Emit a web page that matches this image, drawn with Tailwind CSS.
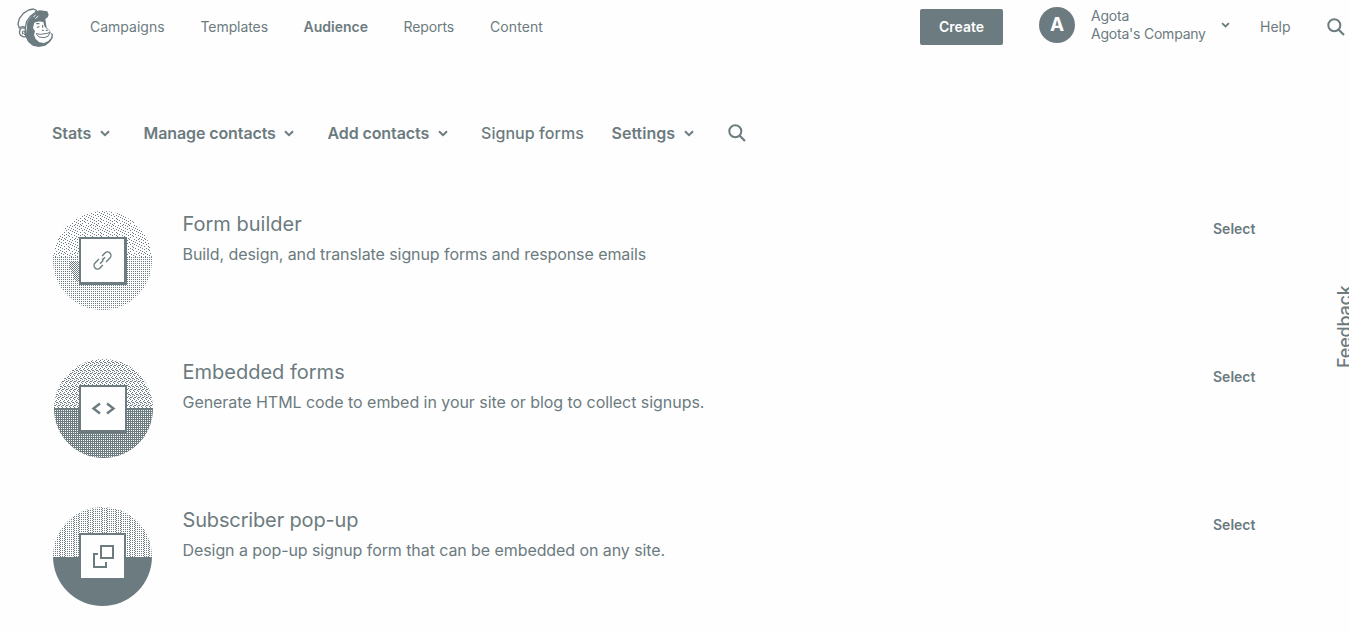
<!DOCTYPE html>
<html lang="en">
<head>
<meta charset="utf-8">
<title>Signup forms</title>
<script src="https://cdn.jsdelivr.net/npm/@tailwindcss/browser@4"></script>
</head>
<body class="relative h-[632px] w-[1349px] overflow-hidden bg-[#fefefe] font-['Inter',sans-serif] text-[#6c7b7f]">
<svg class="absolute size-0" aria-hidden="true">
  <defs>
    <symbol id="chev" viewBox="0 0 10 7"><path d="M1 1.2L5 5.2L9 1.2" fill="none" stroke="currentColor" stroke-width="2"/></symbol>
    <symbol id="search" viewBox="0 0 18 18"><circle cx="7.3" cy="7.3" r="6" fill="none" stroke="currentColor" stroke-width="2"/><path d="M11.7 11.7L17 17" stroke="currentColor" stroke-width="2.2"/></symbol>
    <pattern id="dots" width="2" height="2" patternUnits="userSpaceOnUse"><path d="M0 0h1v1h-1z" fill="#6c7b7f"/></pattern>
    <pattern id="holes" width="2" height="2" patternUnits="userSpaceOnUse"><path d="M0 0h2v1h-1v1h-1z" fill="#6c7b7f"/></pattern>
    <pattern id="check" width="2" height="2" patternUnits="userSpaceOnUse"><path d="M0 0h1v1h-1zM1 1h1v1h-1z" fill="#6c7b7f"/></pattern>
    <pattern id="weave" width="8" height="8" patternUnits="userSpaceOnUse"><path d="M0 0h1v1h-1zM2 1h1v1h-1zM4 0h1v1h-1zM6 1h1v1h-1zM1 2h1v1h-1zM3 3h1v1h-1zM5 2h1v1h-1zM7 3h1v1h-1zM0 4h1v1h-1zM2 5h1v1h-1zM4 4h1v1h-1zM6 5h1v1h-1zM1 6h1v1h-1zM3 7h1v1h-1zM5 6h1v1h-1zM7 7h1v1h-1zM2 3h1v1h-1zM6 3h1v1h-1zM0 6h1v1h-1zM4 6h1v1h-1z" fill="#6c7b7f"/></pattern>
    <pattern id="columns" width="14" height="2" patternUnits="userSpaceOnUse"><path d="M0 0h1v1h-1zM2 0h1v1h-1zM4 0h1v1h-1zM6 0h1v1h-1zM7 1h1v1h-1zM9 1h1v1h-1zM11 1h1v1h-1zM12 0h1v1h-1z" fill="#6c7b7f"/></pattern>
    <pattern id="grain" width="16" height="14" patternUnits="userSpaceOnUse"><path d="M1 0h1v1h-1zM5 0h1v1h-1zM8 0h1v1h-1zM12 0h1v1h-1zM3 1h1v1h-1zM10 1h1v1h-1zM14 1h1v1h-1zM0 2h1v1h-1zM6 2h1v1h-1zM8 3h1v1h-1zM12 3h1v1h-1zM2 3h1v1h-1zM4 4h1v1h-1zM10 4h1v1h-1zM15 4h1v1h-1zM1 5h1v1h-1zM6 5h1v1h-1zM8 6h1v1h-1zM13 5h1v1h-1zM3 6h1v1h-1zM11 7h1v1h-1zM15 7h1v1h-1zM0 8h1v1h-1zM5 7h1v1h-1zM7 8h1v1h-1zM2 9h1v1h-1zM9 9h1v1h-1zM13 9h1v1h-1zM5 10h1v1h-1zM11 10h1v1h-1zM0 11h1v1h-1zM3 12h1v1h-1zM7 11h1v1h-1zM9 12h1v1h-1zM13 12h1v1h-1zM15 10h1v1h-1zM11 13h1v1h-1zM6 13h1v1h-1z" fill="#6c7b7f"/></pattern>
    <clipPath id="disc"><circle cx="49.5" cy="49.5" r="49.5"/></clipPath>
  </defs>
</svg>

<header class="flex h-[54px] items-center">
  <svg class="mt-[2px] ml-[16px] h-[40px] w-[38px] shrink-0" viewBox="48 24 114 120" fill="none" stroke="#6c7b7f" stroke-linejoin="round" stroke-linecap="round">
    <path d="M82 66L96 46L110 33L120 31L142 34L146 44L143 52L136 57L138 72L140 83L150 92L152 98L159 103L158 114L150 126L136 137L116 141L98 137L84 125L77 111L80 86Z" fill="#6c7b7f" stroke="none"/>
    <path d="M58 84L54 72L58 56L70 40L86 30L100 27L109 31L106 38L92 48L80 64L76 82Q66 77 58 84Z" fill="#fefefe" stroke-width="4"/>
    <path d="M76 86Q65 80 60 89Q56 98 62 106Q68 112 77 110Z" fill="#fefefe" stroke-width="4"/>
    <path d="M68 102L67 94L74 93L74 97L71 99L74 104" stroke-width="3"/>
    <path d="M103 68Q117 62 130 66L134 80L140 86L147 90L150 97L155 105L153 114L145 123L132 129L118 127L107 117L102 105L105 94L99 84Z" fill="#fefefe" stroke="none"/>
    <path d="M110 71H117M112 82L117 80M128 76V82M127 91H130M139 91H142" stroke-width="3.500"/>
    <path d="M109 101L122 103L142 100L149 97M110 103L117 111L132 113L144 109L149 99" stroke-width="3"/>
    <path d="M101 50L106 46M107 55L114 49" stroke="#fefefe" stroke-width="3"/>
  </svg>
  <nav class="-mt-px ml-[36px] flex text-[14px] whitespace-nowrap">
    <a class="w-[110.500px]">Campaigns</a>
    <a class="w-[103px] tracking-[-0.08px]">Templates</a>
    <a class="w-[100px] font-semibold">Audience</a>
    <a class="w-[86.500px] tracking-[-0.1px]">Reports</a>
    <a class="tracking-[0.1px]">Content</a>
  </nav>
  <div class="ml-auto flex items-center">
    <button class="h-[36px] w-[83px] rounded-[2px] bg-[#6c7b7f] pb-px text-[14px] font-semibold text-[#fefefe]">Create</button>
    <div class="-mt-1 ml-[36px] flex size-[36px] items-center justify-center rounded-full bg-[#6c7b7f] pt-px text-[19px] font-bold text-[#fefefe]">A</div>
    <div class="-mt-[4px] ml-[16px] w-[116px] text-[14px] leading-[18px] tracking-[-0.22px] whitespace-nowrap"><p>Agota</p><p>Agota's Company</p></div>
    <svg class="-mt-1 ml-[14px] h-[6px] w-[9px]"><use href="#chev"/></svg>
    <a class="-mt-px ml-[30px] w-[31px] text-[14px]">Help</a>
    <svg class="mr-[4px] ml-[36px] size-[18px]"><use href="#search"/></svg>
  </div>
</header>

<nav class="mt-[67px] ml-[52px] flex h-[24px] items-center text-[16px] font-semibold tracking-[-0.1px] whitespace-nowrap">
  <a class="flex w-[91.500px] items-center"><span class="w-[48px] pb-px">Stats</span><svg class="h-[7px] w-[10px]"><use href="#chev"/></svg></a>
  <a class="flex w-[184px] items-center"><span class="w-[140.500px] pb-px">Manage contacts</span><svg class="h-[7px] w-[10px]"><use href="#chev"/></svg></a>
  <a class="flex w-[153.500px] items-center"><span class="w-[110px] pb-px">Add contacts</span><svg class="h-[7px] w-[10px]"><use href="#chev"/></svg></a>
  <a class="w-[130.500px] pb-px font-medium tracking-[0.05px]">Signup forms</a>
  <a class="flex w-[116px] items-center"><span class="w-[72px] pb-px tracking-[0.02px]">Settings</span><svg class="h-[7px] w-[10px]"><use href="#chev"/></svg></a>
  <svg class="size-[18px]"><use href="#search"/></svg>
</nav>

<main class="mt-[66px] ml-[53px] flex w-[1203px] flex-col gap-[49px]">
  <section class="flex h-[99px]">
    <svg class="h-[99px] w-[99px] shrink-0" viewBox="0 0 99 99" shape-rendering="crispEdges">
      <g clip-path="url(#disc)"><rect width="99" height="46" fill="url(#grain)"/><rect y="46" width="99" height="53" fill="url(#dots)"/><path d="M17 50h9v21h-3l-6-13z" fill="url(#check)"/></g>
      <rect x="26" y="26" width="48" height="48" fill="#6c7b7f"/><rect x="28" y="28" width="43" height="43" fill="#fefefe"/>
      <g transform="translate(49.500 49.500) rotate(-45)" fill="none" stroke="#6c7b7f" stroke-width="1.400" shape-rendering="auto"><path d="M-1.500 -3.500H-7A3.500 3.500 0 0 0 -7 3.500H-3M1.500 3.500H7A3.500 3.500 0 0 0 7 -3.500H3M-4 .5H0L1.500 -1.500M4 -.5H0"/></g>
    </svg>
    <div class="ml-[30.500px] grow whitespace-nowrap"><h2 class="text-[20px] leading-[26px]">Form builder</h2><p class="mt-[5px] text-[16px] leading-[24px] tracking-[-0.08px]">Build, design, and translate signup forms and response emails</p></div>
    <a class="mt-[8px] w-[43px] text-[14px] leading-[20px] font-semibold">Select</a>
  </section>
  <section class="flex h-[99px]">
    <svg class="h-[99px] w-[100px] shrink-0" viewBox="-1 0 100 99" shape-rendering="crispEdges">
      <g clip-path="url(#disc)"><rect width="99" height="49" fill="url(#weave)"/><rect y="49" width="99" height="50" fill="url(#holes)"/><path d="M0 49h99v1h-99z" fill="#6c7b7f"/></g>
      <rect x="25" y="26" width="48" height="48" fill="#6c7b7f"/><rect x="27" y="28" width="44" height="43" fill="#fefefe"/>
      <path d="M46 44.500L39.500 49.500L46 54.500M53 44.500L59.500 49.500L53 54.500" fill="none" stroke="#6c7b7f" stroke-width="2.400" shape-rendering="auto"/>
    </svg>
    <div class="ml-[29.500px] grow whitespace-nowrap"><h2 class="text-[20px] leading-[26px]">Embedded forms</h2><p class="mt-[5px] text-[16px] leading-[24px] tracking-[-0.05px]">Generate HTML code to embed in your site or blog to collect signups.</p></div>
    <a class="mt-[8px] w-[43px] text-[14px] leading-[20px] font-semibold">Select</a>
  </section>
  <section class="flex h-[99px]">
    <svg class="h-[99px] w-[99px] shrink-0" viewBox="0 0 99 99" shape-rendering="crispEdges">
      <g clip-path="url(#disc)"><rect width="99" height="50" fill="url(#columns)"/><rect y="50" width="99" height="50" fill="#6c7b7f"/></g>
      <rect x="26" y="26" width="47" height="47" fill="#6c7b7f"/><rect x="28" y="28" width="43" height="43" fill="#fefefe"/>
      <path d="M48 39h12v12h-12zM45 47h-4v13h12v-5" fill="none" stroke="#6c7b7f" stroke-width="2"/>
    </svg>
    <div class="ml-[30.500px] grow whitespace-nowrap"><h2 class="text-[20px] leading-[26px] tracking-[-0.15px]">Subscriber pop-up</h2><p class="mt-[5px] text-[16px] leading-[24px] tracking-[-0.08px]">Design a pop-up signup form that can be embedded on any site.</p></div>
    <a class="mt-[8px] w-[43px] text-[14px] leading-[20px] font-semibold">Select</a>
  </section>
</main>
<aside class="absolute top-[285px] left-[1333px] h-[83px] rotate-180 text-[18px] leading-[24px] font-medium tracking-[-0.2px] whitespace-nowrap [writing-mode:vertical-rl]">Feedback</aside>
</body>
</html>
